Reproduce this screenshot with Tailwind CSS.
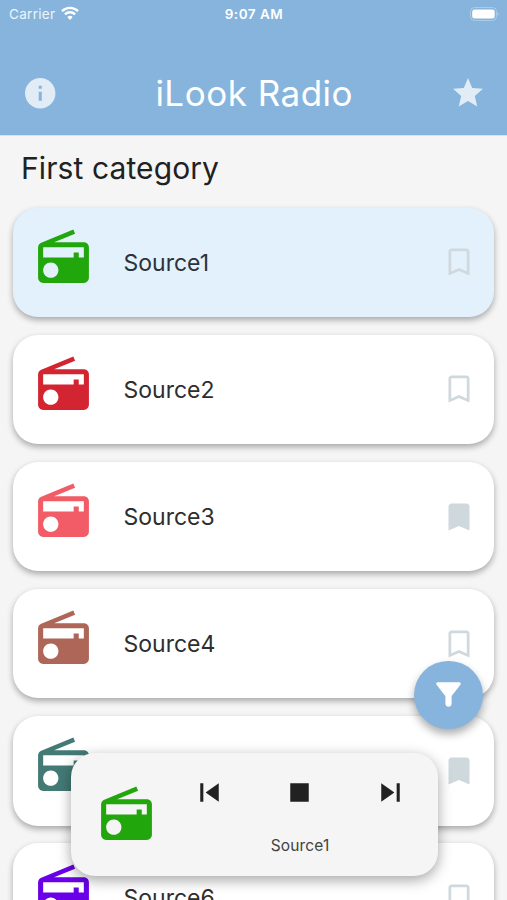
<!DOCTYPE html>
<html lang="en">
<head>
<meta charset="utf-8">
<title>iLook Radio</title>
<script src="https://cdn.jsdelivr.net/npm/@tailwindcss/browser@4"></script>
</head>
<body class="m-0">
<svg class="hidden">
  <symbol id="radio" viewBox="0 0 24 24"><path fill="currentColor" d="M3.24 6.15C2.51 6.43 2 7.17 2 8v12c0 1.1.89 2 2 2h16c1.11 0 2-.9 2-2V8c0-1.11-.89-2-2-2H8.3l8.26-3.34L15.88 1 3.24 6.15zM7 20c-1.66 0-3-1.34-3-3s1.34-3 3-3 3 1.34 3 3-1.34 3-3 3zm13-8h-2v-2h-2v2H4V8h16v4z"/></symbol>
  <symbol id="mark" viewBox="0 0 24 24"><path fill="currentColor" d="M17 3H7c-1.1 0-2 .9-2 2v16l7-3 7 3V5c0-1.1-.9-2-2-2zm.2 15.300l-5.200-2.250L6.800 18.300V4.800h10.400v13.500z"/></symbol>
  <symbol id="mark-full" viewBox="0 0 24 24"><path fill="currentColor" d="M17 3H7c-1.1 0-2 .9-2 2v16l7-3 7 3V5c0-1.1-.9-2-2-2z"/></symbol>
</svg>
<div class="relative flex h-[900px] w-[507px] flex-col overflow-hidden bg-[#f5f5f5] font-['Inter','Noto_Sans',sans-serif] text-[#212121]">
  <header class="flex h-[135px] shrink-0 flex-col bg-[#86b4dc] text-white">
    <div class="grid h-7 grid-cols-3 items-center pr-2 pl-[9px] text-[13px]">
      <div class="flex items-center gap-[6px]">
        <span class="text-[13.5px] tracking-[0.3px] text-white/85">Carrier</span>
        <svg class="-mt-[2px] h-[14px] w-[18px]" viewBox="0 0 18 14" fill="none" stroke="white" stroke-width="2.4"><path d="M1 5.1a11.5 11.5 0 0 1 16 0"/><path d="M3.9 8.3a7.3 7.3 0 0 1 10.2 0"/><path d="M9 14l-2.7-2.9a3.9 3.9 0 0 1 5.4 0z" fill="white" stroke="none"/></svg>
      </div>
      <span class="text-center text-[13.5px] font-semibold tracking-[0.5px] whitespace-nowrap">9:07 AM</span>
      <svg class="-mt-[1px] h-[14px] w-[30px] justify-self-end" viewBox="0 0 30 14"><rect x="1.500" y=".5" width="26" height="13" rx="4" fill="none" stroke="white" stroke-opacity=".3"/><rect x="3.200" y="2.5" width="22.5" height="9" rx="2.5" fill="white"/><path d="M28.500 5v4c1.4-.6 1.4-3.4 0-4z" fill="white" fill-opacity=".4"/></svg>
    </div>
    <div class="mt-[39px] flex h-[52px] items-center justify-between pr-[20.500px] pl-[21.5px]">
      <svg class="size-[36.5px] text-white/75" viewBox="0 0 24 24" fill="currentColor"><path d="M12 2C6.48 2 2 6.48 2 12s4.48 10 10 10 10-4.480 10-10S17.52 2 12 2zm1 15h-2v-6h2v6zm0-8h-2V7h2v2z"/></svg>
      <h1 class="text-[35px] leading-none font-normal tracking-[0.5px]">iLook Radio</h1>
      <svg class="size-9 text-white/75" viewBox="0 0 24 24" fill="currentColor"><path d="M12 17.27L18.18 21l-1.64-7.03L22 9.24l-7.190-.61L12 2 9.190 8.63 2 9.240l5.460 4.730L5.820 21z"/></svg>
    </div>
  </header>
  <main class="flex flex-col border-t border-[#d5e4f0] px-[13px]">
    <h2 class="flex h-[71.600px] items-center pb-[7px] pl-2 text-[30px] leading-none tracking-[0.1px]">First category</h2>
    <div id="list" class="flex flex-col gap-[17.5px]"></div>
  </main>
  <button class="absolute top-[660.5px] left-[414px] flex size-[68.500px] items-center justify-center rounded-full bg-[#86b4dc] text-white shadow-[0_5px_9px_rgba(0,0,0,0.32)]">
    <svg class="size-[37px]" viewBox="0 0 24 24" fill="currentColor"><path d="M4.250 5.610C6.570 8.590 10 13 10 13v5c0 1.100.9 2 2 2s2-.9 2-2v-5s3.430-4.410 5.740-7.390c.51-.66.04-1.610-.8-1.610H5.040c-.83 0-1.300.95-.79 1.610z"/></svg>
  </button>
  <section class="absolute top-[753px] left-[70.500px] flex h-[123px] w-[367px] rounded-[24px] bg-[#f5f5f5] pl-[25.500px] shadow-[0_4px_14px_rgba(0,0,0,0.36)]">
    <svg class="mt-[30.500px] size-[61px] shrink-0 text-[#21a70b]"><use href="#radio"/></svg>
    <div class="ml-[7.500px] flex w-[271px] flex-col">
      <div class="mt-[21px] flex h-[37px] justify-around text-[#212121]">
        <svg class="size-[37px]" viewBox="0 0 24 24" fill="currentColor"><path d="M6 6h2v12H6zm3.500 6l8.500 6V6z"/></svg>
        <svg class="size-[37px]" viewBox="0 0 24 24" fill="currentColor"><path d="M6 6h12v12H6z"/></svg>
        <svg class="size-[37px]" viewBox="0 0 24 24" fill="currentColor"><path d="M6 18l8.500-6L6 6v12zM16 6v12h2V6h-2z"/></svg>
      </div>
      <p class="mt-[25px] text-center text-[15.5px] leading-5 tracking-[0.15px] text-[#424242]">Source1</p>
    </div>
  </section>
</div>
<script>
const rows = [
  ['#21a70b', false], ['#d32531', false], ['#f15c67', true],
  ['#ae6659', false], ['#437a76', true], ['#6a00e8', false]
];
document.getElementById('list').innerHTML = rows.map(([color, saved], i) => `
  <article class="flex h-[109.600px] shrink-0 items-center rounded-[25px] ${i === 0 ? 'bg-[#e3f1fd]' : 'bg-white'} pr-[17px] pl-5 shadow-[0_3px_6px_rgba(0,0,0,0.32)]">
    <svg class="mb-[10px] size-[61px] shrink-0" style="color:${color}"><use href="#radio"/></svg>
    <span class="ml-[29.500px] flex-1 pt-[2px] text-[23px] leading-none ${i === 0 ? 'text-[#2b333a]' : 'text-[#2e2e2e]'}">Source${i + 1}</span>
    <svg class="size-9 text-[#cfd8dc]"><use href="#${saved ? 'mark-full' : 'mark'}"/></svg>
  </article>`).join('');
</script>
</body>
</html>
